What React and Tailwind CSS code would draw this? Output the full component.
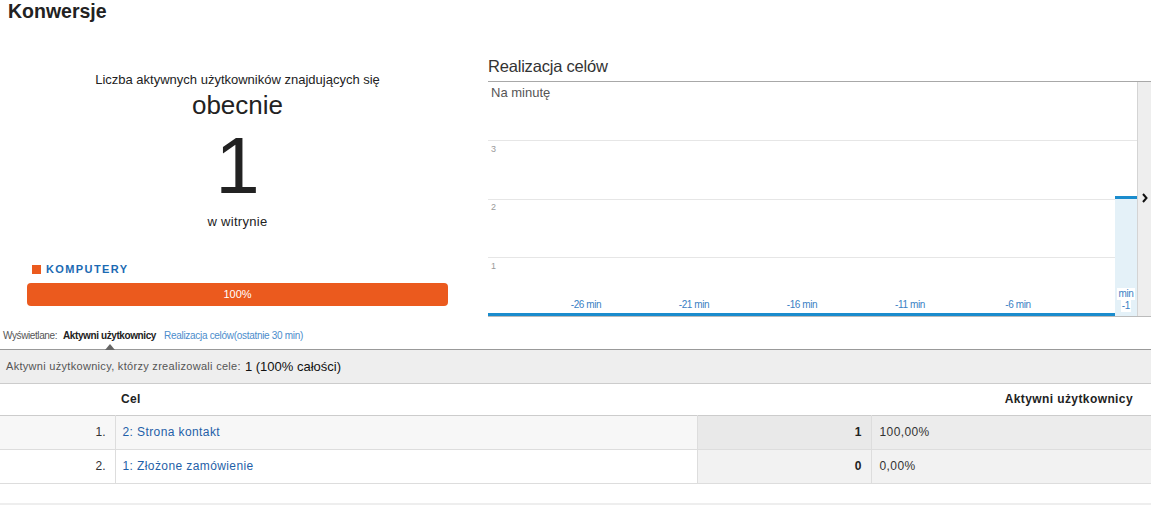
const X_LABELS = ['-26 min', '-21 min', '-16 min', '-11 min', '-6 min']

const ROWS = [
  { idx: '1.', goal: '2: Strona kontakt', value: '1', pct: '100,00%', first: true },
  { idx: '2.', goal: '1: Złożone zamówienie', value: '0', pct: '0,00%', first: false },
]

function Chart() {
  return (
    <div className="flex border-b border-[#bbb]">
      <div className="relative h-[234px] w-[649px]">
        <div className="pl-[3px] pt-[3px] text-[13px] leading-[15px] text-[#555]">Na minutę</div>

        {/* grid lines */}
        <div className="absolute left-0 right-0 top-[58px] h-px bg-[#e6e6e6]" />
        <div className="absolute left-0 right-0 top-[117px] h-px bg-[#e6e6e6]" />
        <div className="absolute left-0 right-0 top-[175px] h-px bg-[#e6e6e6]" />
        <div className="absolute left-[3px] top-[62px] text-[9px] leading-[10px] text-[#9a9a9a]">3</div>
        <div className="absolute left-[3px] top-[120px] text-[9px] leading-[10px] text-[#9a9a9a]">2</div>
        <div className="absolute left-[3px] top-[179px] text-[9px] leading-[10px] text-[#9a9a9a]">1</div>

        {/* current minute */}
        <div className="absolute left-[627px] top-[114px] bottom-0 w-[22px] bg-[#e4f1f8] border-t-[3px] border-[#1a8ccd]" />
        <div className="absolute left-[627px] top-[206px] w-[22px] flex flex-col items-center text-[10px] leading-[12px] text-[#3a7fc4] tracking-[-0.3px]">
          <span className="bg-white px-px">min</span>
          <span className="bg-white px-px">-1</span>
        </div>

        {/* axis */}
        <div className="absolute left-0 bottom-0 h-[3px] w-[627px] bg-[#1a8ccd]" />
        <div className="absolute left-[44px] top-[217px] flex">
          {X_LABELS.map((l) => (
            <div key={l} className="w-[108px] text-center text-[10px] leading-[12px] text-[#3a7fc4] tracking-[-0.4px]">{l}</div>
          ))}
        </div>
      </div>
      <div className="flex-1 bg-[#eeeeee] border-l border-[#d4d4d4] pl-[4px] pt-[111px]">
        <svg width="6" height="10" viewBox="0 0 6 10">
          <path d="M1 1 L4.5 5 L1 9" fill="none" stroke="#111" strokeWidth="2" />
        </svg>
      </div>
    </div>
  )
}

export default function App() {
  return (
    <div className="w-[1151px] h-[505px] overflow-hidden bg-white text-[#222] font-['Liberation_Sans',Arial,sans-serif]">
      <h1 className="h-[22px] pl-[8px] text-[19.5px] leading-[22px] font-bold text-[#222]">Konwersje</h1>

      <div className="flex">
        {/* left: active users */}
        <div className="w-[488px] shrink-0">
          <div className="w-[475px] text-center">
            <div className="mt-[50px] text-[13px] leading-[15px] text-[#222]">Liczba aktywnych użytkowników znajdujących się</div>
            <div className="mt-[3px] text-[26px] leading-[30px] text-[#222]">obecnie</div>
            <div className="mt-[6px] text-[80px] leading-[80px] text-[#222]">1</div>
            <div className="mt-[8px] text-[13px] leading-[15px] text-[#222] tracking-[0.3px]">w witrynie</div>
          </div>
          <div className="mt-[34px] ml-[32px] flex items-center gap-[5px]">
            <span className="w-[9px] h-[9px] bg-[#eb5a1e]" />
            <span className="text-[11px] leading-[13px] font-bold text-[#1b6ab3] tracking-[1.4px]">KOMPUTERY</span>
          </div>
          <div className="mt-[7px] ml-[27px] w-[421px] h-[23px] rounded-[4px] bg-[#eb5a1e] flex items-center justify-center text-[11px] text-white">100%</div>
        </div>

        {/* right: goal chart */}
        <div className="flex-1">
          <div className="mt-[34px] h-[26px] border-b border-[#a8a8a8] text-[16.5px] leading-[20px] text-[#333] tracking-[-0.2px]">Realizacja celów</div>
          <Chart />
        </div>
      </div>

      {/* view tabs */}
      <div className="mt-[13px] pl-[3px] flex items-start text-[10px] leading-[12px] h-[20px] border-b border-[#999]">
        <span className="text-[#555] tracking-[-0.4px]">Wyświetlane:</span>
        <div className="ml-[6px] flex flex-col items-center">
          <span className="font-bold text-[#222] tracking-[-0.4px]">Aktywni użytkownicy</span>
          <span className="mt-[2px] w-0 h-0 border-l-[5.5px] border-r-[5.5px] border-b-[6px] border-l-transparent border-r-transparent border-b-[#666]" />
        </div>
        <span className="ml-[8px] text-[#4c8dcc] tracking-[-0.3px]">Realizacja celów(ostatnie 30 min)</span>
      </div>

      <div className="h-[34px] bg-[#eeeeee] border-b border-[#cccccc] pl-[6px] flex items-center gap-[4px]">
        <span className="text-[11px] text-[#555] tracking-[0.3px]">Aktywni użytkownicy, którzy zrealizowali cele:</span>
        <span className="text-[13px] text-[#111]">1 (100% całości)</span>
      </div>

      <table className="w-full table-fixed border-collapse text-[12px]">
        <colgroup>
          <col className="w-[115px]" />
          <col className="w-[582px]" />
          <col className="w-[174px]" />
          <col />
        </colgroup>
        <thead>
          <tr className="h-[31px] border-b border-[#cccccc]">
            <th />
            <th className="text-left font-bold pl-[6px] text-[#222] tracking-[0.3px]">Cel</th>
            <th colSpan={2} className="text-right font-bold pr-[18px] text-[#222] tracking-[0.4px]">Aktywni użytkownicy</th>
          </tr>
        </thead>
        <tbody>
          {ROWS.map((r) => (
            <tr key={r.idx} className={`h-[34px] border-b border-[#dddddd] ${r.first ? 'bg-[#f7f7f7]' : 'bg-white'}`}>
              <td className="text-right pr-[9px] text-[#333] border-r border-[#dddddd]">{r.idx}</td>
              <td className="pl-[7px] text-[#1f5fa8] tracking-[0.4px]">{r.goal}</td>
              <td className={`text-right pr-[9px] font-bold text-[#222] border-l border-r border-[#dddddd] ${r.first ? 'bg-[#e9e9e9]' : 'bg-[#f2f2f2]'}`}>{r.value}</td>
              <td className={`pl-[8px] text-[#333] tracking-[0.4px] ${r.first ? 'bg-[#ececec]' : 'bg-[#f2f2f2]'}`}>{r.pct}</td>
            </tr>
          ))}
        </tbody>
      </table>
      <div className="mt-[19px] h-[2px] bg-[#eeeeee]" />
    </div>
  )
}
